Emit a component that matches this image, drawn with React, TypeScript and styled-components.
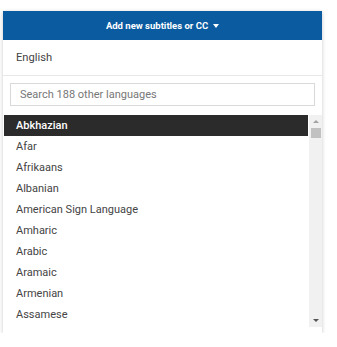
import { FC } from "react";
import styled, { createGlobalStyle } from "styled-components";

const GlobalStyle = createGlobalStyle`
  body {
    margin: 0;
    background: #ffffff;
    font-family: Roboto, "Liberation Sans", sans-serif;
  }
`;

const languages = [
  "Abkhazian",
  "Afar",
  "Afrikaans",
  "Albanian",
  "American Sign Language",
  "Amharic",
  "Arabic",
  "Aramaic",
  "Armenian",
  "Assamese",
];

const Panel = styled.div`
  margin: 11px 0 0 3px;
  width: 319px;
  background: #fff;
  box-shadow: 0 1px 4px rgba(0, 0, 0, 0.22);
  padding-bottom: 6px;
`;

const Header = styled.div`
  height: 29px;
  background: #0a5ba0;
  color: #fff;
  font-size: 9.5px;
  font-weight: 700;
  display: flex;
  align-items: center;
  justify-content: center;
  gap: 5px;
`;

const Caret = styled.span`
  width: 0;
  height: 0;
  border-left: 3.5px solid transparent;
  border-right: 3.5px solid transparent;
  border-top: 4px solid #fff;
  margin-top: 1px;
`;

const CurrentRow = styled.div`
  height: 35px;
  display: flex;
  align-items: center;
  padding-left: 13px;
  font-size: 11.2px;
  color: #444;
  border-bottom: 1px solid #e8e8e8;
`;

const SearchWrap = styled.div`
  padding: 7px 7px 9px 7px;
`;

const Search = styled.input`
  box-sizing: border-box;
  width: 305px;
  height: 23px;
  border: 1px solid #d9d9d9;
  padding: 0 9px;
  font-family: inherit;
  font-size: 11px;
  color: #444;
  outline: none;
  &::placeholder {
    color: #777;
  }
`;

const ListArea = styled.div`
  display: flex;
  height: 212px;
  margin-left: 1px;
`;

const List = styled.ul`
  list-style: none;
  margin: 0;
  padding: 0;
  width: 304px;
  overflow: hidden;
`;

const Item = styled.li<{ $selected?: boolean }>`
  height: 21px;
  display: flex;
  align-items: center;
  padding-left: 12px;
  font-size: 11px;
  color: ${({ $selected }) => ($selected ? "#fff" : "#444")};
  background: ${({ $selected }) => ($selected ? "#2b2b2b" : "transparent")};
  font-weight: ${({ $selected }) => ($selected ? 500 : 400)};
`;

const Scrollbar = styled.div`
  width: 13px;
  margin-left: 1px;
  background: #f1f1f1;
  display: flex;
  flex-direction: column;
  align-items: center;
`;

const Arrow = styled.span<{ $down?: boolean }>`
  width: 0;
  height: 0;
  border-left: 3px solid transparent;
  border-right: 3px solid transparent;
  ${({ $down }) =>
    $down
      ? "border-top: 3px solid #555; margin-top: auto; margin-bottom: 5px;"
      : "border-bottom: 3px solid #a3a3a3; margin-top: 5px;"}
`;

const Thumb = styled.div`
  width: 10px;
  height: 10px;
  margin-top: 5px;
  background: #c1c1c1;
`;

const App: FC = () => {
  return (
    <>
      <GlobalStyle />
      <Panel>
        <Header>
          Add new subtitles or CC
          <Caret />
        </Header>
        <CurrentRow>English</CurrentRow>
        <SearchWrap>
          <Search placeholder="Search 188 other languages" />
        </SearchWrap>
        <ListArea>
          <List>
            {languages.map((lang, i) => (
              <Item key={lang} $selected={i === 0}>
                {lang}
              </Item>
            ))}
          </List>
          <Scrollbar>
            <Arrow />
            <Thumb />
            <Arrow $down />
          </Scrollbar>
        </ListArea>
      </Panel>
    </>
  );
};

export default App;
